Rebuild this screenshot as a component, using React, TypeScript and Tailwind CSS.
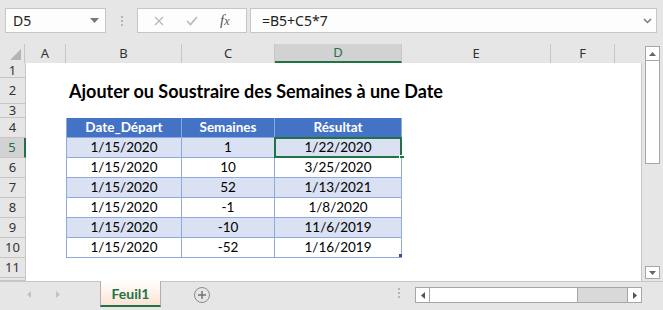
import React from 'react';

const COLS = [
  { key: 'A', w: 41 },
  { key: 'B', w: 116 },
  { key: 'C', w: 93 },
  { key: 'D', w: 127 },
  { key: 'E', w: 149 },
  { key: 'F', w: 64 },
];

// Row 12 only peeks out under the sheet tabs
const ROW_H: Record<number, number> = { 1: 15, 2: 26, 3: 14, 12: 3 };

const DATA = [
  ['1/15/2020', '1', '1/22/2020'],
  ['1/15/2020', '10', '3/25/2020'],
  ['1/15/2020', '52', '1/13/2021'],
  ['1/15/2020', '-1', '1/8/2020'],
  ['1/15/2020', '-10', '11/6/2019'],
  ['1/15/2020', '-52', '1/16/2019'],
];

const cellFont = { fontFamily: 'Lato, "Liberation Sans", sans-serif' };

function FormulaBar() {
  return (
    <div className="flex h-[44px] items-start bg-[#e6e6e6] pt-[8px] pl-[5px]" style={{ fontFamily: '"Noto Sans", "Liberation Sans", sans-serif' }}>
      {/* name box */}
      <div className="flex h-[25px] w-[101px] items-center justify-between border border-[#c6c6c6] bg-[#fdfdfd] pl-[7px] pr-[6px] text-[14px] text-[#222]">
        <span>D5</span>
        <svg width="9" height="5" viewBox="0 0 9 5"><path d="M0 0h9L4.5 5z" fill="#777" /></svg>
      </div>
      <div className="flex h-[25px] w-[31px] flex-col items-center justify-center gap-[2px]">
        <span className="h-[2px] w-[2px] bg-[#b5b5b5]" />
        <span className="h-[2px] w-[2px] bg-[#b5b5b5]" />
        <span className="h-[2px] w-[2px] bg-[#b5b5b5]" />
      </div>
      {/* cancel / enter / fx */}
      <div className="flex h-[25px] w-[110px] items-center border border-[#c6c6c6] bg-[#fdfdfd]">
        <svg className="ml-[16px]" width="10" height="10" viewBox="0 0 10 10">
          <path d="M1 1l8 8M9 1l-8 8" stroke="#b8b8b8" strokeWidth="1.3" />
        </svg>
        <svg className="ml-[22px]" width="12" height="10" viewBox="0 0 12 10">
          <path d="M1 5l3.5 3.5L11 1" stroke="#b8b8b8" strokeWidth="1.6" fill="none" />
        </svg>
        <span className="ml-[22px] text-[15px] italic text-[#555]" style={{ fontFamily: '"Liberation Serif", serif' }}>
          f<span className="text-[12px]">x</span>
        </span>
      </div>
      <div className="ml-[3px] flex h-[25px] w-[407px] items-center justify-between border border-[#c6c6c6] bg-[#fdfdfd] pl-[11px] pr-[4px] text-[14px] text-[#222]">
        <span>=B5+C5*7</span>
        <svg width="9" height="6" viewBox="0 0 9 6"><path d="M1 1l3.5 3.5L8 1" stroke="#777" strokeWidth="1.5" fill="none" /></svg>
      </div>
    </div>
  );
}

function ColumnHeader() {
  return (
    <div className="flex h-[19px] bg-[#e6e6e6]" style={{ fontFamily: '"Noto Sans", "Liberation Sans", sans-serif' }}>
      <div className="flex w-[25px] items-end justify-end border-r border-[#c6c6c6] pb-[3px] pr-[3px]">
        <svg width="11" height="11" viewBox="0 0 11 11"><path d="M11 0v11H0z" fill="#b4b4b4" /></svg>
      </div>
      {COLS.map(c => {
        const sel = c.key === 'D';
        return (
          <div
            key={c.key}
            className={`flex items-center justify-center border-r border-[#c6c6c6] text-[13px] ${
              sel ? 'border-b-2 border-b-[#217346] bg-[#d2d2d2] text-[#217346]' : 'text-[#333]'
            }`}
            style={{ width: c.w }}
          >
            {c.key}
          </div>
        );
      })}
      <div className="flex-1" />
    </div>
  );
}

function RowHead({ n, h }: { n: number; h: number }) {
  const sel = n === 5;
  return (
    <div
      className={`flex w-[26px] shrink-0 items-center justify-center border-b border-[#c6c6c6] text-[13px] leading-none ${
        sel ? 'border-r-2 border-r-[#217346] bg-[#d2d2d2] text-[#217346]' : 'border-r border-r-[#c6c6c6] bg-[#e6e6e6] text-[#333]'
      }`}
      style={{ height: h, fontFamily: '"Noto Sans", "Liberation Sans", sans-serif' }}
    >
      {n <= 11 ? n : ''}
    </div>
  );
}

function TableRow({ cells, header, band, selected }: { cells: string[]; header?: boolean; band?: boolean; selected?: boolean }) {
  const widths = [116, 93, 127];
  const bg = header ? 'bg-[#4472c4] text-white font-bold' : band ? 'bg-[#d9e1f2] text-black' : 'bg-white text-black';
  return (
    <div className="flex h-full text-[13.5px]" style={cellFont}>
      {cells.map((t, i) => (
        <div
          key={i}
          className={`relative flex items-center justify-center border-r border-b border-[#8ea9db] ${bg} ${i === 0 ? 'border-l' : ''}`}
          style={{ width: widths[i] }}
        >
          {t}
          {selected && i === 2 && (
            <>
              <div className="absolute -top-[1px] -left-[1px] -right-[1px] -bottom-[1px] border-2 border-[#217346]" />
              <div className="absolute -right-[4px] -bottom-[4px] h-[6px] w-[6px] border border-white bg-[#217346]" />
            </>
          )}
        </div>
      ))}
    </div>
  );
}

function Grid() {
  const rows = Array.from({ length: 12 }, (_, i) => i + 1);
  return (
    <div className="border-r border-[#c6c6c6]">
      {rows.map(n => {
        const h = ROW_H[n] ?? 20;
        let content: React.ReactNode = null;
        if (n === 2) {
          content = (
            <div className="flex h-full items-center pl-[3px] text-[18px] font-bold text-black" style={cellFont}>
              Ajouter ou Soustraire des Semaines à une Date
            </div>
          );
        } else if (n === 4) {
          content = <TableRow cells={['Date_Départ', 'Semaines', 'Résultat']} header />;
        } else if (n >= 5 && n <= 10) {
          content = <TableRow cells={DATA[n - 5]} band={n % 2 === 1} selected={n === 5} />;
        }
        return (
          <div key={n} className="flex" style={{ height: h }}>
            <RowHead n={n} h={h} />
            <div className="w-[40px] shrink-0 bg-white" />
            <div className="relative flex-1 bg-white">
              {content}
              {n === 10 && <div className="absolute left-[333px] bottom-[1px] h-[3px] w-[3px] bg-[#2f4f9f]" />}
            </div>
          </div>
        );
      })}
    </div>
  );
}

function VScroll() {
  return (
    <div className="flex w-[21px] flex-col items-center bg-[#e6e6e6] pt-[2px]">
      <div className="flex h-[15px] w-[15px] items-center justify-center border border-[#a6a6a6] bg-white">
        <svg width="7" height="4" viewBox="0 0 7 4"><path d="M0 4h7L3.5 0z" fill="#666" /></svg>
      </div>
      <div className="h-[103px] w-[15px] border border-t-0 border-[#a6a6a6] bg-white" />
      <div className="flex-1" />
      <div className="mb-[2px] flex h-[13px] w-[15px] items-center justify-center border border-[#a6a6a6] bg-white">
        <svg width="7" height="4" viewBox="0 0 7 4"><path d="M0 0h7L3.5 4z" fill="#666" /></svg>
      </div>
    </div>
  );
}

function TabBar() {
  return (
    <div className="flex h-[29px] items-start border-t border-[#c6c6c6] bg-[#e6e6e6]">
      <div className="flex h-[25px] w-[100px] items-center">
        <svg className="ml-[27px]" width="4" height="7" viewBox="0 0 4 7"><path d="M4 0v7L0 3.5z" fill="#c2c2c2" /></svg>
        <svg className="ml-[25px]" width="4" height="7" viewBox="0 0 4 7"><path d="M0 0v7L4 3.5z" fill="#c2c2c2" /></svg>
      </div>
      <div
        className="-mt-[1px] flex h-[26px] w-[61px] items-center justify-center border-x border-[#b0b0b0] border-b-2 border-b-[#217346] bg-gradient-to-b from-white to-[#fbe3d3] text-[14px] font-bold text-[#217346]"
        style={cellFont}
      >
        Feuil1
      </div>
      <div className="ml-[33px] mt-[5px] flex h-[16px] w-[16px] items-center justify-center rounded-full border border-[#8a8a8a]">
        <svg width="8" height="8" viewBox="0 0 8 8"><path d="M4 0v8M0 4h8" stroke="#707070" strokeWidth="1.4" /></svg>
      </div>
      <div className="ml-[188px] mt-[6px] flex flex-col gap-[2px]">
        <span className="h-[2px] w-[2px] bg-[#b5b5b5]" />
        <span className="h-[2px] w-[2px] bg-[#b5b5b5]" />
        <span className="h-[2px] w-[2px] bg-[#b5b5b5]" />
      </div>
      <div className="ml-[15px] mt-[5px] flex h-[16px] w-[227px] border border-[#a6a6a6] bg-[#d9d9d9]">
        <div className="flex w-[14px] items-center justify-center border-r border-[#a6a6a6] bg-white">
          <svg width="4" height="7" viewBox="0 0 4 7"><path d="M4 0v7L0 3.5z" fill="#555" /></svg>
        </div>
        <div className="w-[148px] border-r border-[#a6a6a6] bg-white" />
        <div className="flex-1" />
        <div className="flex w-[14px] items-center justify-center border-l border-[#a6a6a6] bg-white">
          <svg width="4" height="7" viewBox="0 0 4 7"><path d="M0 0v7L4 3.5z" fill="#555" /></svg>
        </div>
      </div>
    </div>
  );
}

export default function App() {
  return (
    <div className="flex h-[310px] w-[663px] flex-col overflow-hidden bg-[#e6e6e6]">
      <FormulaBar />
      <div className="flex">
        <div className="w-[642px]">
          <ColumnHeader />
          <Grid />
        </div>
        <VScroll />
      </div>
      <TabBar />
    </div>
  );
}
